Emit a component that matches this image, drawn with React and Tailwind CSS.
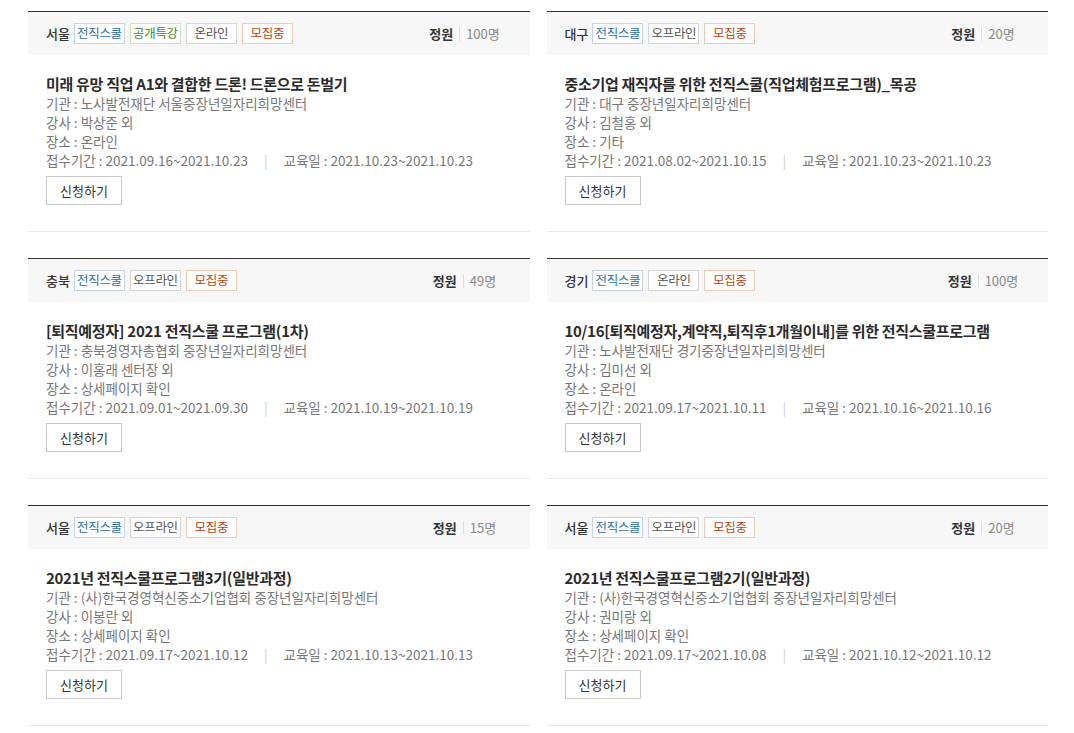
import React from 'react'

const tagStyles = {
  blue: 'text-[#2f6ea5] border-[#c3d5e6]',
  green: 'text-[#3f8a22] border-[#cfe2c2]',
  gray: 'text-[#555] border-[#d6d6d6]',
  red: 'text-[#c2410c] border-[#f1c9b5]',
}

const courses = [
  {
    region: '서울',
    tags: [['전직스쿨', 'blue'], ['공개특강', 'green'], ['온라인', 'gray'], ['모집중', 'red']],
    seats: '100명',
    title: '미래 유망 직업 A1와 결합한 드론! 드론으로 돈벌기',
    org: '노사발전재단 서울중장년일자리희망센터',
    teacher: '박상준 외',
    place: '온라인',
    apply: '2021.09.16~2021.10.23',
    edu: '2021.10.23~2021.10.23',
  },
  {
    region: '대구',
    tags: [['전직스쿨', 'blue'], ['오프라인', 'gray'], ['모집중', 'red']],
    seats: '20명',
    title: '중소기업 재직자를 위한 전직스쿨(직업체험프로그램)_목공',
    org: '대구 중장년일자리희망센터',
    teacher: '김철홍 외',
    place: '기타',
    apply: '2021.08.02~2021.10.15',
    edu: '2021.10.23~2021.10.23',
  },
  {
    region: '충북',
    tags: [['전직스쿨', 'blue'], ['오프라인', 'gray'], ['모집중', 'red']],
    seats: '49명',
    title: '[퇴직예정자] 2021 전직스쿨 프로그램(1차)',
    org: '충북경영자총협회 중장년일자리희망센터',
    teacher: '이홍래 센터장 외',
    place: '상세페이지 확인',
    apply: '2021.09.01~2021.09.30',
    edu: '2021.10.19~2021.10.19',
  },
  {
    region: '경기',
    tags: [['전직스쿨', 'blue'], ['온라인', 'gray'], ['모집중', 'red']],
    seats: '100명',
    title: '10/16[퇴직예정자,계약직,퇴직후1개월이내]를 위한 전직스쿨프로그램',
    org: '노사발전재단 경기중장년일자리희망센터',
    teacher: '김미선 외',
    place: '온라인',
    apply: '2021.09.17~2021.10.11',
    edu: '2021.10.16~2021.10.16',
  },
  {
    region: '서울',
    tags: [['전직스쿨', 'blue'], ['오프라인', 'gray'], ['모집중', 'red']],
    seats: '15명',
    title: '2021년 전직스쿨프로그램3기(일반과정)',
    org: '(사)한국경영혁신중소기업협회 중장년일자리희망센터',
    teacher: '이봉란 외',
    place: '상세페이지 확인',
    apply: '2021.09.17~2021.10.12',
    edu: '2021.10.13~2021.10.13',
  },
  {
    region: '서울',
    tags: [['전직스쿨', 'blue'], ['오프라인', 'gray'], ['모집중', 'red']],
    seats: '20명',
    title: '2021년 전직스쿨프로그램2기(일반과정)',
    org: '(사)한국경영혁신중소기업협회 중장년일자리희망센터',
    teacher: '권미랑 외',
    place: '상세페이지 확인',
    apply: '2021.09.17~2021.10.08',
    edu: '2021.10.12~2021.10.12',
  },
]

function CourseCard({ c }) {
  return (
    <div className="border-t border-t-[#333] border-b border-b-[#e8e8e8]">
      {/* Header */}
      <div className="h-[43px] bg-[#f7f7f7] flex items-center justify-between pl-[18px] pr-[20px]">
        <div className="flex items-center gap-[5px]">
          <span className="text-[13px] text-[#333] font-medium mr-[-1px]">{c.region}</span>
          {c.tags.map(([label, color]) => (
            <span
              key={label}
              className={`w-[51px] h-[21px] flex items-center justify-center bg-white border text-[12.5px] tracking-[-0.3px] ${tagStyles[color]}`}
            >
              {label}
            </span>
          ))}
        </div>
        <div className="w-[90px] flex items-center justify-center text-[13px]">
          <span className="font-bold text-[#333]">정원</span>
          <span className="w-px h-[14px] bg-[#ddd] mx-[6px]" />
          <span className="text-[#888]">{c.seats}</span>
        </div>
      </div>

      {/* Body */}
      <div className="px-[18px] pt-[19px] pb-[26px]">
        <h3 className="text-[15px] leading-[20px] font-bold text-[#2b2b2b] tracking-[-0.3px]">{c.title}</h3>
        <div className="text-[13.5px] leading-[19px] text-[#777]">
          <p>기관 : {c.org}</p>
          <p>강사 : {c.teacher}</p>
          <p>장소 : {c.place}</p>
          <p className="flex items-center">
            <span>접수기간 : {c.apply}</span>
            <span className="mx-[16px] text-[#ccc]">|</span>
            <span>교육일 : {c.edu}</span>
          </p>
        </div>
        <button className="mt-[6px] w-[76px] h-[29px] border border-[#c9c9c9] bg-white text-[13px] text-[#333]">
          신청하기
        </button>
      </div>
    </div>
  )
}

export default function App() {
  return (
    <div className="min-h-screen bg-white font-['Noto_Sans_CJK_KR','Noto_Sans',sans-serif]">
      <div className="grid grid-cols-2 gap-x-[17px] gap-y-[26px] pl-[28px] pr-[26px] pt-[11px]">
        {courses.map((c, i) => (
          <CourseCard key={i} c={c} />
        ))}
      </div>
    </div>
  )
}
